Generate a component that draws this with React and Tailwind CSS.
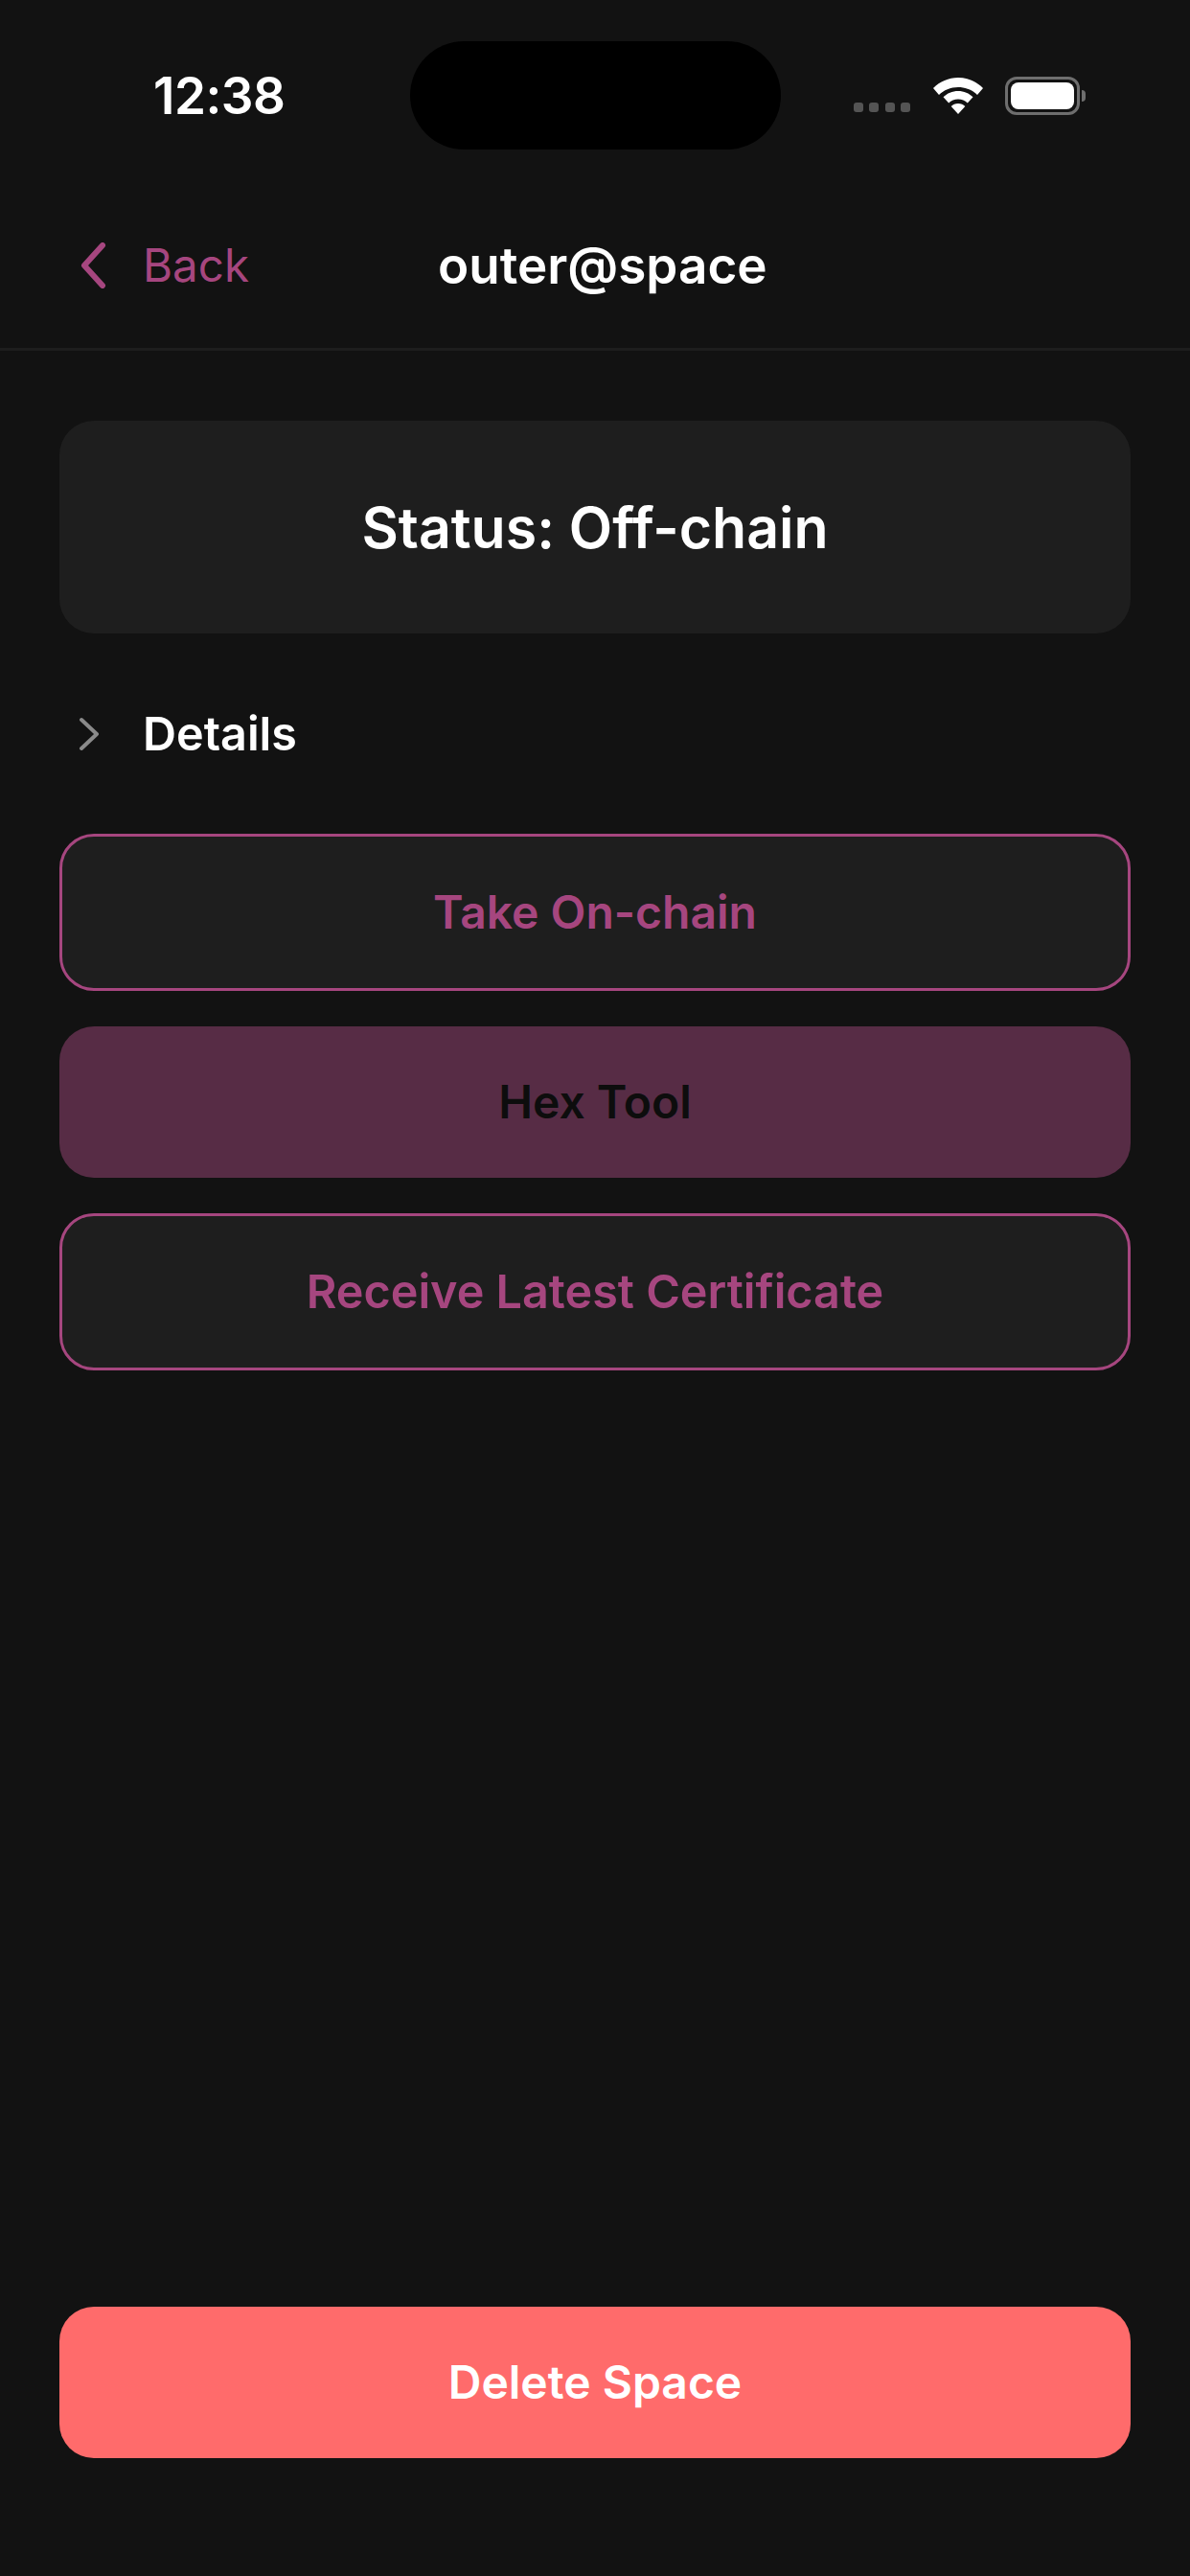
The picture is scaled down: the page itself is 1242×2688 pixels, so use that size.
export default function App() {
  return (
    <div className="relative flex h-[2688px] w-[1242px] flex-col bg-[#121212] font-['Inter','Liberation_Sans',sans-serif]">
      {/* status bar */}
      <div className="relative flex h-[199px] shrink-0 items-start">
        <span className="ml-[160px] mt-[69px] text-[53px] font-semibold leading-[62px] tracking-[-0.5px] text-white">12:38</span>
        <div className="absolute left-[428px] top-[43px] h-[113px] w-[387px] rounded-full bg-black" />
        <div className="absolute left-[891px] top-[107px] flex gap-[6.3px]">
          <span className="h-[10px] w-[10px] rounded-[3px] bg-[#545454]" />
          <span className="h-[10px] w-[10px] rounded-[3px] bg-[#545454]" />
          <span className="h-[10px] w-[10px] rounded-[3px] bg-[#545454]" />
          <span className="h-[10px] w-[10px] rounded-[3px] bg-[#545454]" />
        </div>
        <svg className="absolute left-[973px] top-[80px]" width="54" height="40" viewBox="0 0 54 40">
          <path d="M27 1C17 1 8 5 1 12l6 7C12 14 19 11 27 11s15 3 20 8l6-7C46 5 37 1 27 1Z" fill="#fff" />
          <path d="M27 15c-6 0-11.500 2.300-15.500 6.300l5.700 6.200C19.800 25 23.200 23.600 27 23.600s7.200 1.400 9.800 3.900l5.700-6.200C38.500 17.300 33 15 27 15Z" fill="#fff" />
          <path d="M27 28c-3 0-5.500 1.100-7.300 2.900L27 39l7.300-8.100C32.500 29.100 30 28 27 28Z" fill="#fff" />
        </svg>
        <div className="absolute left-[1049px] top-[80px] flex items-center">
          <div className="flex h-[40px] w-[78px] items-center justify-center rounded-[12px] border-[3px] border-[#6e6e6e]">
            <div className="h-[28px] w-[66px] rounded-[8px] bg-white" />
          </div>
          <div className="ml-[2px] h-[12px] w-[4px] rounded-r-[4px] bg-[#6e6e6e]" />
        </div>
      </div>

      {/* header */}
      <div className="flex h-[167px] shrink-0 items-center border-b-[3px] border-[#1e1e1e] pb-[8px]">
        <svg className="ml-[84px]" width="28" height="48" viewBox="0 0 28 48" fill="none">
          <path d="M23 3 4 24l19 21" stroke="#a6467f" strokeWidth="6" strokeLinecap="round" strokeLinejoin="round" />
        </svg>
        <span className="ml-[37px] w-[116px] text-[47.500px] font-normal leading-[60px] text-[#a6467f]">Back</span>
        <span className="ml-[192px] text-[53px] font-semibold leading-[60px] text-white">outer@space</span>
      </div>

      {/* content */}
      <div className="flex min-h-0 flex-1 flex-col px-[62px] pt-[73px]">
        <div className="flex h-[222px] items-center justify-center rounded-[36px] bg-[#1e1e1e] pt-[2px] text-[59px] font-semibold text-white">
          Status: Off-chain
        </div>

        <div className="mt-[74px] flex h-[62px] items-center">
          <svg className="ml-[19px]" width="24" height="38" viewBox="0 0 24 38" fill="none">
            <path d="M4 4 20 19 4 34" stroke="#8a8a8a" strokeWidth="4" strokeLinecap="round" strokeLinejoin="round" />
          </svg>
          <span className="ml-[44px] text-[48.500px] font-semibold leading-[56px] text-white">Details</span>
        </div>

        <button className="mt-[73px] flex h-[164px] items-center justify-center rounded-[36px] border-[3px] border-[#a6467f] bg-[#1e1e1e] text-[48px] font-semibold text-[#a6467f]">
          Take On-chain
        </button>
        <button className="mt-[37px] flex h-[158px] items-center justify-center rounded-[36px] bg-[#572c45] text-[48px] font-semibold text-[#0d0d0d]">
          Hex Tool
        </button>
        <button className="mt-[37px] flex h-[164px] items-center justify-center rounded-[36px] border-[3px] border-[#a6467f] bg-[#1e1e1e] text-[48.500px] font-semibold text-[#a6467f]">
          Receive Latest Certificate
        </button>

        <button className="mb-[123px] mt-auto flex h-[158px] items-center justify-center rounded-[36px] bg-[#ff6b6b] text-[48px] font-semibold text-white">
          Delete Space
        </button>
      </div>
    </div>
  );
}
